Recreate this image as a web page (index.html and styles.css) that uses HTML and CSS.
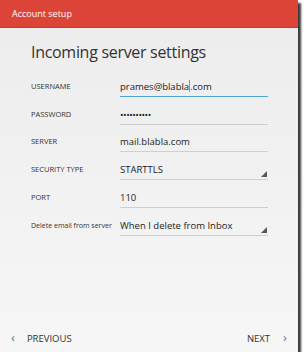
FILE: index.html
```html
<!DOCTYPE html>
<html lang="en">

<head>
    <meta charset="UTF-8">
    <title>Account setup</title>
    <link rel="stylesheet" href="styles.css">
</head>

<body>
    <div id="window">
        <header id="header">Account setup</header>
        <section id="content">
            <h1 class="title">Incoming server settings</h1>
            <div class="row">
                <label class="label">USERNAME</label>
                <div class="field active">prames@blabla<span class="caret"></span>.com</div>
            </div>
            <div class="row">
                <label class="label">PASSWORD</label>
                <div class="field dots">••••••••••</div>
            </div>
            <div class="row">
                <label class="label">SERVER</label>
                <div class="field">mail.blabla.com</div>
            </div>
            <div class="row">
                <label class="label">SECURITY TYPE</label>
                <div class="field select">STARTTLS</div>
            </div>
            <div class="row">
                <label class="label">PORT</label>
                <div class="field">110</div>
            </div>
            <div class="row">
                <label class="label small">Delete email from server</label>
                <div class="field select">When I delete from Inbox</div>
            </div>
        </section>
        <footer id="footer">
            <div class="navButton"><span class="arrow">&lsaquo;</span>PREVIOUS</div>
            <div class="navButton">NEXT<span class="arrow right">&rsaquo;</span></div>
        </footer>
    </div>
</body>

</html>
```

FILE: styles.css
```css
body {
    margin: 0;
    padding: 0;
    background: #ffffff;
    font-family: 'Open Sans', sans-serif;
}

#window {
    width: 298px;
    height: 352px;
    display: flex;
    flex-direction: column;
    background: linear-gradient(#ececec, #f6f6f6);
    box-shadow: 3px 3px 2px #3a3a3a;
}

#header {
    height: 27px;
    background-color: #dc4437;
    border-bottom: 1px solid #c63a2e;
    color: #ffffff;
    font-size: 9px;
    line-height: 28px;
    padding-left: 12px;
}

#content {
    flex: 1;
    padding-left: 31px;
}

.title {
    margin: 12px 0 5px 0;
    font-size: 16px;
    letter-spacing: -0.3px;
    font-weight: normal;
    color: #333333;
    line-height: 24px;
}

.row {
    display: flex;
    align-items: flex-end;
    height: 27.8px;
}

.label {
    width: 89px;
    font-size: 7.5px;
    line-height: 15px;
    color: #333333;
    padding-bottom: 3px;
    white-space: nowrap;
}

.label.small {
    font-size: 7px;
    text-transform: none;
}

.field {
    position: relative;
    width: 148px;
    font-size: 9.5px;
    color: #222222;
    padding-bottom: 2px;
    border-bottom: 1px solid #cfcfcf;
    line-height: 15px;
}

.field.active {
    border-bottom: 1.5px solid #4aa8d8;
}

.field.dots {
    font-size: 9.5px;
    letter-spacing: -0.5px;
}

.caret {
    display: inline-block;
    width: 1px;
    height: 12px;
    background: #4aa8d8;
    vertical-align: -2px;
}

.field.select::after {
    content: '';
    position: absolute;
    right: 1px;
    bottom: 2px;
    border-left: 6px solid transparent;
    border-bottom: 6px solid #555555;
}

#footer {
    height: 30px;
    display: flex;
    justify-content: space-between;
    align-items: center;
    padding: 2px 11px 0 11px;
    font-size: 9.5px;
    color: #333333;
}

.arrow {
    font-size: 13px;
    color: #777777;
    margin-right: 12px;
}

.arrow.right {
    margin-right: 0;
    margin-left: 13px;
}
```
